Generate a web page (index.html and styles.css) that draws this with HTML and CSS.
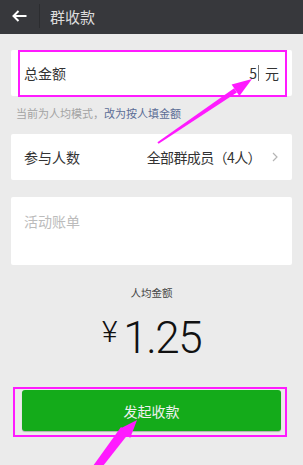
FILE: index.html
```html
<!DOCTYPE html>
<html lang="zh">
<head>
<meta charset="utf-8">
<title>群收款</title>
<link rel="stylesheet" href="styles.css">
</head>
<body>
<div class="page">
  <header class="header">
    <svg class="back" width="15" height="12" viewBox="0 0 15 12"><path d="M14.5 6H1.5M6.5 1L1.5 6l5 5" fill="none" stroke="#ffffff" stroke-width="2" stroke-linejoin="miter"/></svg>
    <span class="divider"></span>
    <span class="title">群收款</span>
  </header>
  <main class="main">
    <div class="card row amount">
      <span class="label">总金额</span>
      <span class="value"><span class="num">5</span><span class="cursor"></span><span class="unit">元</span></span>
    </div>
    <p class="hint">当前为人均模式，<span class="link">改为按人填金额</span></p>
    <div class="card row members">
      <span class="label">参与人数</span>
      <span class="value"><span class="members-text">全部群成员（4人）</span><svg class="chev" width="6" height="10" viewBox="0 0 6 10"><path d="M1 1l4 4-4 4" fill="none" stroke="#b5b5b5" stroke-width="1.2"/></svg></span>
    </div>
    <div class="card note">
      <span class="placeholder">活动账单</span>
    </div>
    <p class="avg-label">人均金额</p>
    <div class="avg"><span class="yen">¥</span><span class="digits">1.25</span></div>
    <button class="btn">发起收款</button>
  </main>
  <svg class="annot" width="303" height="465" viewBox="0 0 303 465">
    <rect x="19" y="51" width="267" height="45" fill="none" stroke="#ff1aff" stroke-width="2"/>
    <rect x="14" y="388" width="272" height="48" fill="none" stroke="#ff1aff" stroke-width="2"/>
    <polygon points="158.6,143.8 157.4,142.2 234.1,88.2 236.9,92.4" fill="#ff1aff"/>
    <polygon points="252,79 231.6,84.5 239.4,96.1" fill="#ff1aff"/>
    <polygon points="91.5,468 97.5,473 129,433 121,427" fill="#ff1aff"/>
    <polygon points="137,420 119.8,428.8 130.2,438" fill="#ff1aff"/>
  </svg>
</div>
</body>
</html>
```

FILE: styles.css
```css
* { box-sizing: border-box; }
html, body { margin: 0; padding: 0; }
body {
  background: #ebebeb;
  font-family: "Noto Sans CJK SC", "Noto Sans", sans-serif;
  color: #333;
  width: 303px;
  height: 465px;
  overflow: hidden;
}
.page { position: relative; width: 303px; height: 465px; }
.header {
  height: 34px;
  background: #37383c;
  display: flex;
  align-items: center;
  padding-left: 12px;
}
.back { display: block; margin-top: -3px; }
.divider {
  width: 1px;
  height: 24px;
  background: #2c2d30;
  margin-left: 12px;
  margin-top: -3px;
}
.title {
  margin-left: 10px;
  color: #dcdcdc;
  font-size: 15px;
  line-height: 1;
  margin-top: -2px;
}
.main {
  padding: 0 11px;
  display: flex;
  flex-direction: column;
}
.card {
  background: #fff;
  border-radius: 2px;
}
.row {
  display: flex;
  align-items: center;
  justify-content: space-between;
  padding: 0 13px;
  height: 46px;
  font-size: 14px;
}
.amount { margin-top: 16px; }
.label { color: #333; }
.value { display: flex; align-items: center; color: #333; }
.num { font-size: 14px; }
.cursor {
  width: 1px;
  height: 16px;
  background: #777;
  margin: 0 6px 0 1px;
}
.unit { font-size: 14px; }
.hint {
  margin: 10px 0 0 5px;
  font-size: 11px;
  line-height: 14px;
  color: #a3a3a3;
}
.link { color: #5b6d96; }
.members { margin-top: 14px; padding-right: 14px; }
.members-text { letter-spacing: -0.6px; }
.chev { margin-left: 11px; }
.note {
  margin-top: 17px;
  height: 68px;
  padding: 16px 13px 0;
}
.placeholder { font-size: 14px; color: #bcbcbc; line-height: 16px; display: block; }
.avg-label {
  margin: 21px 0 0;
  text-align: center;
  font-size: 10.5px;
  line-height: 14px;
  color: #444;
}
.avg {
  margin-top: 18px;
  display: flex;
  justify-content: center;
  align-items: flex-start;
  color: #111;
  font-family: Roboto, "Noto Sans", sans-serif;
  font-weight: 300;
  height: 46px;
}
.yen { font-size: 30px; line-height: 30px; margin-right: 6px; margin-top: -1px; }
.digits { font-size: 44px; line-height: 40px; letter-spacing: -1.5px; }
.btn {
  margin: 26px 11px 0;
  height: 41px;
  border: none;
  border-radius: 3px;
  background: #14ab1a;
  color: #f0f0f0;
  font-family: "Noto Sans CJK SC", sans-serif;
  font-size: 14px;
  box-shadow: 0 1px 1px rgba(0,0,0,0.25);
}
.annot { position: absolute; left: 0; top: 0; pointer-events: none; }
```
